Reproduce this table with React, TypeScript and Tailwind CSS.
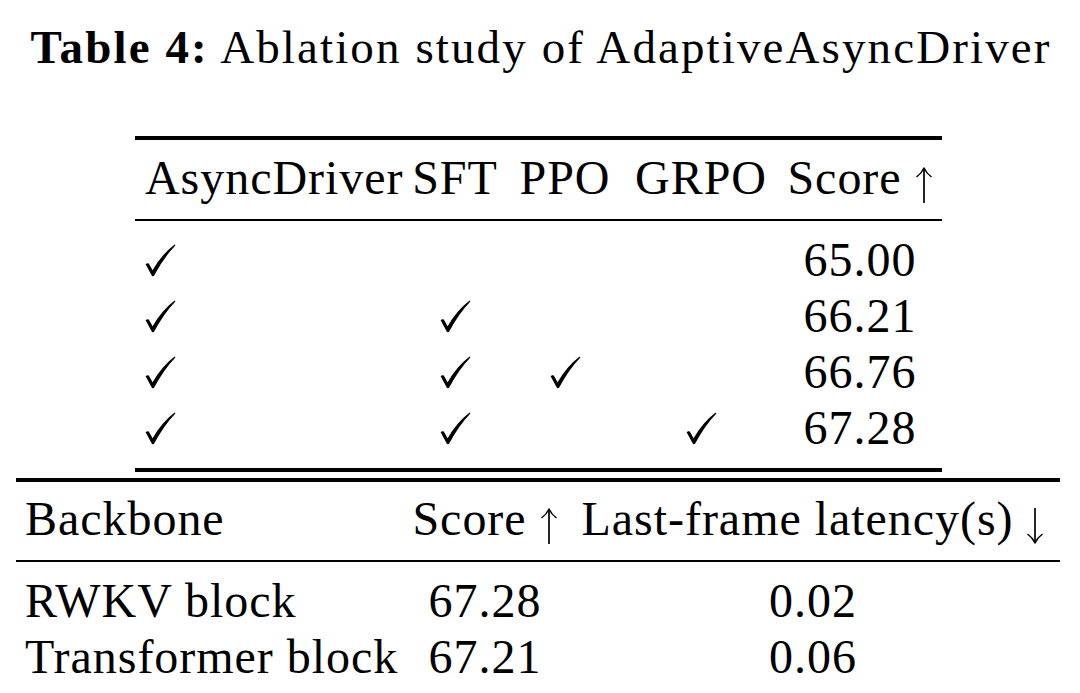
import React from "react";

const Check = () => (
  <svg width="31" height="33" viewBox="0 0 31 33" className="inline-block">
    <path
      d="M0.6 20.2 Q2.2 18.6 3.8 19.4 L7.6 26.2 Q16.5 10.5 29.6 0.4 L30.4 1.4 Q18.6 13.6 9.2 31.6 Q8.1 33 6.9 31.7 Z"
      fill="#000"
    />
  </svg>
);

// tall thin arrow like the TeX \uparrow / \downarrow
const Arrow = ({ down = false }: { down?: boolean }) => (
  <svg
    width="18"
    height="36"
    viewBox="0 0 18 36"
    className={`inline-block align-[-9px] ${down ? "rotate-180" : ""}`}
  >
    <path d="M9 1.5 V36" stroke="#000" strokeWidth="1.7" fill="none" />
    <path
      d="M1.5 10 Q6.5 6.5 9 1 Q11.5 6.5 16.5 10"
      stroke="#000"
      strokeWidth="1.5"
      fill="none"
      strokeLinejoin="round"
    />
  </svg>
);

const ablationRows = [
  { sft: false, ppo: false, grpo: false, score: "65.00" },
  { sft: true, ppo: false, grpo: false, score: "66.21" },
  { sft: true, ppo: true, grpo: false, score: "66.76" },
  { sft: true, ppo: false, grpo: true, score: "67.28" },
];

const backboneRows = [
  { name: "RWKV block", score: "67.28", latency: "0.02" },
  { name: "Transformer block", score: "67.21", latency: "0.06" },
];

export default function App() {
  return (
    <div
      className="w-[1080px] h-[693px] bg-white text-black overflow-hidden"
      style={{ fontFamily: '"Liberation Serif", "Times New Roman", serif' }}
    >
      {/* Caption */}
      <div className="pt-[21px] pl-[2px] text-center text-[47px] leading-[52px] tracking-[0.045em] whitespace-nowrap">
        <span className="font-bold">Table 4:</span> Ablation study of AdaptiveAsyncDriver
      </div>

      {/* Ablation table */}
      <div className="ml-[135px] mt-[63px] w-[807px] text-[48px] leading-[56px] tracking-[0.02em]">
        <div className="h-[4px] bg-black" />
        <div className="grid grid-cols-[269px_102px_118px_154px_164px] pt-[10px] pb-[13px] whitespace-nowrap">
          <div className="pl-[10px]">AsyncDriver</div>
          <div className="text-center">SFT</div>
          <div className="text-center">PPO</div>
          <div className="text-center">GRPO</div>
          <div className="text-center">
            Score <Arrow />
          </div>
        </div>
        <div className="h-[2px] bg-black" />
        <div className="pt-[11px] pb-[12px]">
          {ablationRows.map((r) => (
            <div key={r.score} className="grid grid-cols-[269px_102px_118px_154px_164px] h-[56px] items-center">
              <div className="pl-[10px] flex items-center">
                <Check />
              </div>
              <div className="flex justify-center">{r.sft && <Check />}</div>
              <div className="flex justify-center">{r.ppo && <Check />}</div>
              <div className="flex justify-center">{r.grpo && <Check />}</div>
              <div className="text-center">{r.score}</div>
            </div>
          ))}
        </div>
        <div className="h-[4px] bg-black" />
      </div>

      {/* Backbone table */}
      <div className="ml-[16px] mt-[6px] w-[1044px] text-[48px] leading-[56px] tracking-[0.02em]">
        <div className="h-[4px] bg-black" />
        <div className="grid grid-cols-[388px_162px_494px] pt-[9px] pb-[13px] whitespace-nowrap">
          <div className="pl-[9px]">Backbone</div>
          <div className="text-center">
            Score <Arrow />
          </div>
          <div className="text-center">
            Last-frame latency(s) <Arrow down />
          </div>
        </div>
        <div className="h-[2px] bg-black" />
        <div className="pt-[11px]">
          {backboneRows.map((r) => (
            <div key={r.name} className="grid grid-cols-[388px_162px_494px] h-[56px] whitespace-nowrap">
              <div className="pl-[9px]">{r.name}</div>
              <div className="text-center">{r.score}</div>
              <div className="text-center">{r.latency}</div>
            </div>
          ))}
        </div>
      </div>
    </div>
  );
}
